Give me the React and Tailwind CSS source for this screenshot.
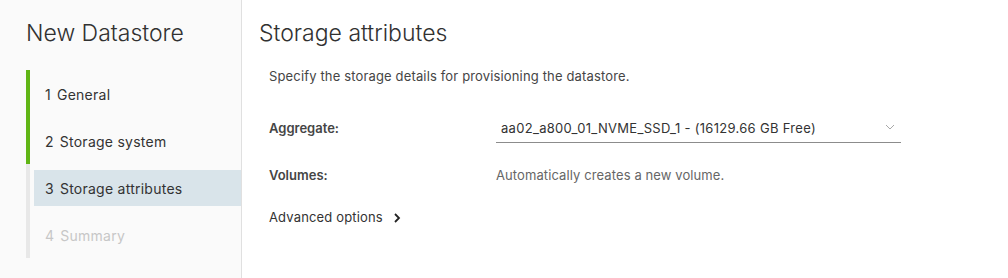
import React from "react";

const font = { fontFamily: 'Inter, "Open Sans", "Liberation Sans", sans-serif' };

function Step({ n, label, state }) {
  const bar =
    state === "done" ? "border-[#60b515]" : "border-[#e8e8e8]";
  const active = state === "active";
  const text =
    state === "todo" ? "text-[#c7c7c7]" : "text-[#333333]";
  return (
    <div className={`border-l-4 ${bar} pl-1 pt-[6px] pb-[5px]`}>
      <div
        className={`h-[36px] flex items-center pl-[11px] text-[14px] tracking-[0.25px] ${text} ${
          active ? "bg-[#d9e4ea]" : ""
        }`}
      >
        <span className="mr-[6px]">{n}</span>
        <span>{label}</span>
      </div>
    </div>
  );
}

export default function App() {
  return (
    <div
      className="w-[1008px] h-[278px] flex bg-white overflow-hidden"
      style={font}
    >
      <div className="w-[242px] shrink-0 bg-[#fafafa] border-r border-[#e0e0e0] pl-[26px]">
        <div className="pt-[18px] h-[70px] text-[23px] font-light text-[#313131] leading-[30px]">
          New Datastore
        </div>
        <div>
          <Step n="1" label="General" state="done" />
          <Step n="2" label="Storage system" state="done" />
          <Step n="3" label="Storage attributes" state="active" />
          <Step n="4" label="Summary" state="todo" />
        </div>
      </div>
      <div className="flex-1 pl-[17px]">
        <div className="pt-[18px] text-[23px] font-light text-[#313131] leading-[30px]">
          Storage attributes
        </div>
        <div className="pl-[10px]">
          <div className="mt-[18px] text-[13px] tracking-[0.15px] text-[#454545] leading-[20px]">
            Specify the storage details for provisioning the datastore.
          </div>
          <div className="mt-[32px] flex items-start">
            <div className="w-[227px] text-[13px] font-semibold text-[#454545] leading-[20px] pt-[0px]">
              Aggregate:
            </div>
            <div className="w-[405px] border-b border-[#8c8c8c] h-[25px] flex items-start justify-between pl-[5px] pr-[6px]">
              <span className="text-[13px] tracking-[0.3px] text-[#333333] leading-[20px]">
                aa02_a800_01_NVME_SSD_1 - (16129.66 GB Free)
              </span>
              <svg
                width="10"
                height="6"
                viewBox="0 0 10 6"
                className="mt-[6px]"
              >
                <path
                  d="M1 1 L5 5 L9 1"
                  fill="none"
                  stroke="#a8a8a8"
                  strokeWidth="1"
                />
              </svg>
            </div>
          </div>
          <div className="mt-[22px] flex items-center">
            <div className="w-[227px] text-[13px] font-semibold text-[#454545] leading-[20px]">
              Volumes:
            </div>
            <div className="text-[13px] tracking-[0.1px] text-[#666666] leading-[20px]">
              Automatically creates a new volume.
            </div>
          </div>
          <div className="mt-[22px] flex items-center text-[13px] tracking-[0.15px] text-[#333333] leading-[20px]">
            <span>Advanced options</span>
            <svg width="8" height="12" viewBox="0 0 8 12" className="ml-[10px] mt-[2px]">
              <path
                d="M2 2 L6 6 L2 10"
                fill="none"
                stroke="#222"
                strokeWidth="1.8"
              />
            </svg>
          </div>
        </div>
      </div>
    </div>
  );
}
